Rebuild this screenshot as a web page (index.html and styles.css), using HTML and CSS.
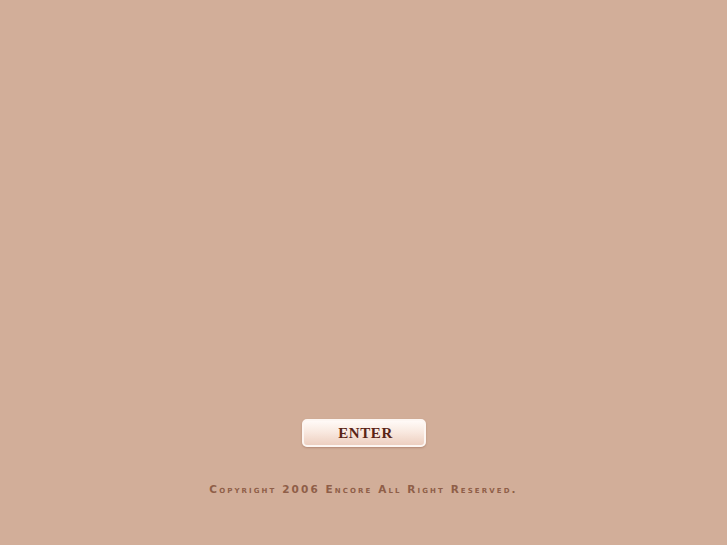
FILE: index.html
```html
<!DOCTYPE html>
<html>
<head>
<meta charset="utf-8">
<link rel="stylesheet" href="styles.css">
</head>
<body>
<div class="page">
  <a class="enter" href="#">ENTER</a>
  <p class="copy">Copyright 2006 Encore All Right Reserved.</p>
</div>
</body>
</html>
```
FILE: styles.css
```css
html, body {
  margin: 0;
  padding: 0;
  background: #d2ae99;
}
.page {
  width: 727px;
  height: 545px;
  display: flex;
  flex-direction: column;
  align-items: center;
  padding-top: 419px;
  box-sizing: border-box;
}
.enter {
  display: flex;
  align-items: center;
  justify-content: center;
  width: 116px;
  height: 24px;
  padding-left: 4px;
  box-sizing: content-box;
  border: 2px solid #fdf6f2;
  border-radius: 5px;
  background: linear-gradient(#fffaf7 0%, #f9e9e0 45%, #edcfc0 100%);
  box-shadow: 0 1px 2px rgba(120, 70, 50, 0.35);
  color: #5a2416;
  font-family: "Liberation Serif", serif;
  font-weight: bold;
  font-size: 15px;
  letter-spacing: 0.6px;
  text-decoration: none;
}
.copy {
  margin: 36px 0 0 0;
  font-family: "DejaVu Sans", sans-serif;
  font-variant: small-caps;
  font-weight: bold;
  font-size: 10.5px;
  letter-spacing: 2.1px;
  color: #8f5e48;
}
```
